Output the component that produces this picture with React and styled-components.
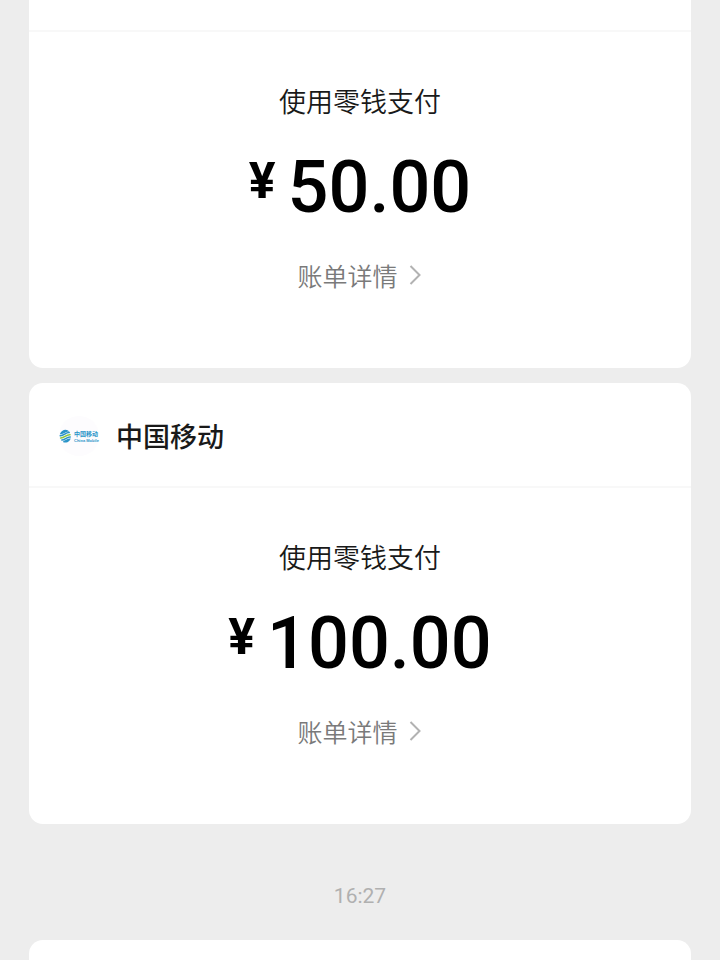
import styled, { createGlobalStyle } from 'styled-components';

const GlobalStyle = createGlobalStyle`
* {
  box-sizing: border-box;
}
body {
  margin: 0;
  background-color: #ededed;
  font-family: "Noto Sans CJK SC", sans-serif;
}
`;

const Chat = styled.main`
height: 100vh;
overflow: hidden;
display: flex;
flex-direction: column;
padding: 0 29px;
`;

const Card = styled.article`
flex-shrink: 0;
background-color: #fff;
border-radius: ${(props) => (props.$cut ? '0 0 14px 14px' : '14px')};
margin-bottom: 15px;
`;

const CardHeader = styled.header`
display: flex;
align-items: center;
gap: 17px;
height: ${(props) => (props.$cut ? '32px' : '105px')};
padding: 2px 30px 0;
border-bottom: 2px solid #f8f8f8;
`;

const LogoSvg = styled.svg`
width: 40px;
height: 40px;
border-radius: 50%;
background-color: #fdfcfe;
overflow: visible;
`;

const Merchant = styled.h2`
margin: 0;
font-size: 27px;
line-height: 40px;
font-weight: 500;
color: #191919;
`;

const CardBody = styled.div`
display: flex;
flex-direction: column;
align-items: center;
padding: 48px 30px 74px;
`;

const Method = styled.p`
margin: 0;
font-size: 27px;
line-height: 42px;
font-weight: 350;
color: #191919;
`;

const Amount = styled.p`
display: flex;
align-items: flex-start;
gap: 12px;
margin: 24px 0 0;
font-family: Roboto, sans-serif;
font-size: 72px;
line-height: 84px;
font-weight: 500;
color: #000;
`;

const Yen = styled.span`
font-size: 50px;
line-height: 70px;
font-weight: 700;
`;

const Detail = styled.a`
display: flex;
align-items: center;
gap: 11px;
margin-top: 26px;
padding-right: 2px;
font-size: 25px;
line-height: 38px;
font-weight: 350;
color: #7a7a7a;
text-decoration: none;
`;

const Time = styled.time`
flex-shrink: 0;
align-self: center;
margin: 42px 0 29px;
font-family: Roboto, sans-serif;
font-size: 21px;
line-height: 30px;
color: #b0b0b0;
`;

const Empty = styled.div`
height: 100px;
`;

function MobileLogo() {
  return (
    <LogoSvg viewBox="0 0 40 40" aria-hidden="true">
      <g fill="none" strokeLinecap="round" strokeWidth="1.5">
        <path d="M2 17.4C3.4 14.4 6.6 13.8 8.4 15C6.2 15.2 4.6 17.4 2 17.4Z" stroke="#2a94c8" fill="#2a94c8" />
        <path d="M1.2 19.8C5 20 6.4 16.4 10.2 16.6" stroke="#2a94c8" />
        <path d="M1.6 22C5.6 22.2 6.6 18.6 11 18.8" stroke="#8cc63f" />
        <path d="M2.8 24C6.8 24.2 7.4 20.8 11.2 21" stroke="#2a94c8" />
        <path d="M4.4 25.6C7 26.4 9.8 25.2 10.6 23.2C8.2 23.2 7 25.4 4.4 25.6Z" stroke="#2a94c8" fill="#2a94c8" />
      </g>
      <text x="15" y="20" fontSize="6" fontWeight="700" fill="#2a94c8">中国移动</text>
      <text x="15" y="26" fontSize="4" fontFamily="Liberation Sans, sans-serif" fontWeight="700" fill="#2a94c8">China Mobile</text>
    </LogoSvg>
  );
}

function Chevron() {
  return (
    <svg width="12" height="20" viewBox="0 0 12 20" fill="none" aria-hidden="true">
      <path d="M1.5 1L10.5 10L1.5 19" stroke="#b2b2b2" strokeWidth="2" />
    </svg>
  );
}

function PaymentCard({ merchant, amount }) {
  return (
    <Card $cut={!merchant}>
      <CardHeader $cut={!merchant}>
        {merchant && (
          <>
            <MobileLogo />
            <Merchant>{merchant}</Merchant>
          </>
        )}
      </CardHeader>
      <CardBody>
        <Method>使用零钱支付</Method>
        <Amount>
          <Yen>¥</Yen>
          <span>{amount}</span>
        </Amount>
        <Detail href="#">
          账单详情
          <Chevron />
        </Detail>
      </CardBody>
    </Card>
  );
}

function App() {
  return (
    <>
      <GlobalStyle />
      <Chat>
        <PaymentCard amount="50.00" />
        <PaymentCard merchant="中国移动" amount="100.00" />
        <Time>16:27</Time>
        <Card>
          <Empty />
        </Card>
      </Chat>
    </>
  );
}

export default App;
